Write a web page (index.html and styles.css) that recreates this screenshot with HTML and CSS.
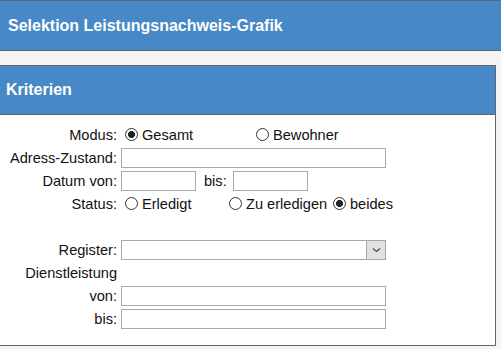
FILE: index.html
```html
<!DOCTYPE html>
<html lang="de">
<head>
    <meta charset="UTF-8">
    <meta name="viewport" content="width=device-width, initial-scale=1.0">
    <title>Selektion Leistungsnachweis-Grafik</title>
    <link rel="stylesheet" href="styles.css">
</head>
<body>
    <div class="page-header">Selektion Leistungsnachweis-Grafik</div>

    <div class="panel">
        <div class="panel-header">Kriterien</div>
        <div class="panel-body">
            <div class="form-grid">
                <label class="lbl">Modus:</label>
                <div class="ctrl">
                    <label class="opt opt-wide"><input type="radio" name="modus" checked>Gesamt</label>
                    <label class="opt"><input type="radio" name="modus">Bewohner</label>
                </div>

                <label class="lbl" for="adress">Adress-Zustand:</label>
                <div class="ctrl"><input type="text" id="adress" class="txt txt-long"></div>

                <label class="lbl" for="datumVon">Datum von:</label>
                <div class="ctrl">
                    <input type="text" id="datumVon" class="txt txt-short">
                    <label class="bis-lbl" for="datumBis">bis:</label>
                    <input type="text" id="datumBis" class="txt txt-short">
                </div>

                <label class="lbl">Status:</label>
                <div class="ctrl">
                    <label class="opt opt-mid"><input type="radio" name="status">Erledigt</label>
                    <label class="opt opt-mid"><input type="radio" name="status">Zu erledigen</label>
                    <label class="opt"><input type="radio" name="status" checked>beides</label>
                </div>

                <div class="lbl"></div>
                <div class="ctrl"></div>

                <label class="lbl" for="register">Register:</label>
                <div class="ctrl">
                    <div class="select-box">
                        <select id="register"><option></option></select>
                        <span class="select-btn">
                            <svg width="9" height="6" viewBox="0 0 9 6"><path d="M1 1.5 L4.5 4.5 L8 1.5" fill="none" stroke="#4a4a4a" stroke-width="1.2"/></svg>
                        </span>
                    </div>
                </div>

                <div class="lbl">Dienstleistung</div>
                <div class="ctrl"></div>

                <label class="lbl" for="dlVon">von:</label>
                <div class="ctrl"><input type="text" id="dlVon" class="txt txt-long"></div>

                <label class="lbl" for="dlBis">bis:</label>
                <div class="ctrl"><input type="text" id="dlBis" class="txt txt-long"></div>
            </div>
        </div>
    </div>
</body>
</html>
```

FILE: styles.css
```css
body {
    margin: 0;
    padding: 0;
    background: #f4f4f4;
    font-family: 'Liberation Sans', Arial, sans-serif;
    font-size: 14.6px;
    color: #111;
    overflow: hidden;
}

.page-header {
    background: #4788c7;
    color: #fff;
    font-size: 16px;
    font-weight: bold;
    height: 49px;
    line-height: 50px;
    padding-left: 8px;
    border-top: 1px solid #666;
    border-bottom: 1px solid #666;
}

.panel {
    width: 495px;
    margin-top: 14px;
    border-top: 1px solid #666;
    border-right: 1px solid #666;
    border-bottom: 1px solid #666;
    background: #fff;
}

.panel-header {
    background: #4788c7;
    color: #fff;
    font-size: 16px;
    font-weight: bold;
    height: 48px;
    line-height: 47px;
    padding-left: 6px;
    border-bottom: 1px solid #666;
}

.panel-body {
    padding: 8px 0 15px 0;
}

.form-grid {
    display: grid;
    grid-template-columns: 117px 1fr;
    column-gap: 4px;
    grid-auto-rows: 23px;
    align-items: center;
}

.lbl {
    text-align: right;
    white-space: nowrap;
}

.ctrl {
    display: flex;
    align-items: center;
    height: 23px;
}

.opt {
    display: inline-flex;
    align-items: center;
    white-space: nowrap;
}

.opt-wide {
    width: 131px;
}

.opt-mid {
    width: 104px;
}

input[type="radio"] {
    appearance: none;
    -webkit-appearance: none;
    width: 13px;
    height: 13px;
    margin: 0 4px 0 4px;
    border: 1px solid #333;
    border-radius: 50%;
    background: #fff;
    box-sizing: border-box;
}

input[type="radio"]:checked {
    background: radial-gradient(circle, #222 0, #222 3.2px, #fff 3.8px);
}

.txt {
    box-sizing: border-box;
    height: 20px;
    margin: 0;
    padding: 1px 3px;
    border: 1px solid #a9a9a9;
    background: #fff;
    font-family: inherit;
    font-size: 14px;
    outline: none;
}

.txt-long {
    width: 265px;
}

.txt-short {
    width: 75px;
}

.bis-lbl {
    margin: 0 6px 0 8px;
}

.select-box {
    position: relative;
    width: 265px;
    height: 20px;
}

.select-box select {
    appearance: none;
    -webkit-appearance: none;
    box-sizing: border-box;
    width: 100%;
    height: 20px;
    margin: 0;
    border: 1px solid #a9a9a9;
    background: #fff;
    font-family: inherit;
    font-size: 14px;
    outline: none;
}

.select-btn {
    position: absolute;
    top: 0;
    right: 0;
    box-sizing: border-box;
    width: 20px;
    height: 20px;
    background: #e1e1e1;
    border: 1px solid #a9a9a9;
    display: flex;
    align-items: center;
    justify-content: center;
}
```
